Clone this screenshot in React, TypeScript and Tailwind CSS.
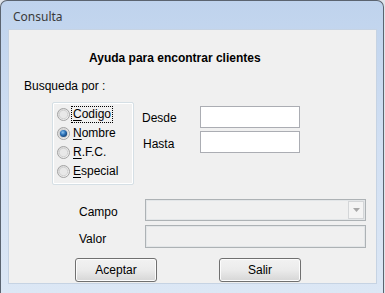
import React from 'react';

const font = { fontFamily: '"Liberation Sans", Arial, sans-serif' };

function Radio({ checked }: { checked?: boolean }) {
  return (
    <svg width="13" height="13" viewBox="0 0 13 13" className="shrink-0">
      <defs>
        <linearGradient id="rg" x1="0" y1="0" x2="1" y2="1">
          <stop offset="0" stopColor="#d4d4d4" />
          <stop offset="1" stopColor="#f7f7f7" />
        </linearGradient>
        <radialGradient id="dot" cx="0.4" cy="0.35" r="0.7">
          <stop offset="0" stopColor="#8fc4f0" />
          <stop offset="0.5" stopColor="#2c72b8" />
          <stop offset="1" stopColor="#153e6e" />
        </radialGradient>
      </defs>
      <circle cx="6.5" cy="6.5" r="6" fill="url(#rg)" stroke="#a3a3a3" strokeWidth="1" />
      <circle cx="6.5" cy="6.5" r="4.2" fill="#e8e8e8" stroke="#cccccc" strokeWidth="0.8" />
      {checked && <circle cx="6.5" cy="6.5" r="3.6" fill="url(#dot)" />}
    </svg>
  );
}

function Option({ label, checked, focus }: { label: string; checked?: boolean; focus?: boolean }) {
  return (
    <div className="flex h-[19px] items-center pl-[4px]">
      <Radio checked={checked} />
      <span
        className={
          'ml-[1px] px-[1px] leading-[15px] ' +
          (focus ? 'border border-dotted border-black' : 'border border-transparent')
        }
      >
        <span className="underline underline-offset-2">{label[0]}</span>
        {label.slice(1)}
      </span>
    </div>
  );
}

function Button({ children }: { children: React.ReactNode }) {
  return (
    <div className="flex h-[24px] w-[82px] items-center justify-center rounded-[3px] border border-[#707070] bg-gradient-to-b from-[#f2f2f2] via-[#ebebeb] to-[#d6d6d6] text-[12px] text-black shadow-[inset_0_0_0_1px_#fcfcfc]">
      {children}
    </div>
  );
}

export default function App() {
  return (
    <div className="h-[293px] w-[385px] bg-[#dfe4ea]" style={font}>
      <div className="flex h-[293px] w-[384px] flex-col rounded-t-[7px] border border-b-0 border-[#5b6470] bg-gradient-to-b from-[#bfd3ed] via-[#d2e0f3] to-[#dce7f5] pl-[8px] pr-[7px]">
        <div
          className="h-[29px] pl-[4px] pt-[8px] text-[12px] leading-[16px] text-[#3a3a3a]"
          style={{ fontFamily: '"Noto Sans", "Open Sans", sans-serif' }}
        >
          Consulta
        </div>
        <div className="flex h-[253px] w-[367px] flex-col bg-[#f0f0f0] text-[12px] text-black shadow-[0_0_0_1px_#c6d3e3]">
          <div className="ml-[80px] mt-[21px] h-[14px] text-[12px] font-bold leading-[14px]">
            Ayuda para encontrar clientes
          </div>
          <div className="ml-[15px] mt-[14px] h-[14px] leading-[14px]">Busqueda por :</div>

          <div className="mt-[9px] flex">
            <div className="ml-[43px] h-[83px] w-[82px] rounded-[2px] border border-[#d5dfe5] pt-[2px] shadow-[inset_0_0_0_1px_#ffffff]">
              <Option label="Codigo" focus />
              <Option label="Nombre" checked />
              <Option label="R.F.C." />
              <Option label="Especial" />
            </div>
            <div className="ml-[8px] flex flex-col gap-[3px] pt-[4px]">
              <div className="flex items-center">
                <span className="w-[58px] pt-[1px]">Desde</span>
                <div className="h-[22px] w-[100px] border border-[#abadb3] bg-white" />
              </div>
              <div className="flex items-center">
                <span className="w-[58px] pl-[1px] pt-[4px]">Hasta</span>
                <div className="h-[22px] w-[100px] border border-[#abadb3] bg-white" />
              </div>
            </div>
          </div>

          <div className="mt-[13px] flex items-center">
            <span className="ml-[70px] w-[66px] pt-[5px]">Campo</span>
            <div className="flex h-[22px] w-[221px] items-center justify-end border border-[#adb2b5] bg-[#f0f0f0] p-[1px] shadow-[inset_0_0_0_1px_#e3e6e8]">
              <div className="flex h-[18px] w-[16px] items-center justify-center border border-[#d4d6d8] bg-[#f4f4f4]">
                <svg width="7" height="4" viewBox="0 0 7 4">
                  <path d="M0 0 H7 L3.5 4 Z" fill="#a8a8a8" />
                </svg>
              </div>
            </div>
          </div>

          <div className="mt-[4px] flex items-center">
            <span className="ml-[70px] w-[66px] pt-[4px]">Valor</span>
            <div className="h-[23px] w-[221px] border border-[#adb2b5] bg-[#f0f0f0] shadow-[inset_0_0_0_1px_#e3e6e8]" />
          </div>

          <div className="mt-[10px] flex">
            <div className="ml-[66px]">
              <Button>Aceptar</Button>
            </div>
            <div className="ml-[62px]">
              <Button>Salir</Button>
            </div>
          </div>
        </div>
      </div>
    </div>
  );
}
